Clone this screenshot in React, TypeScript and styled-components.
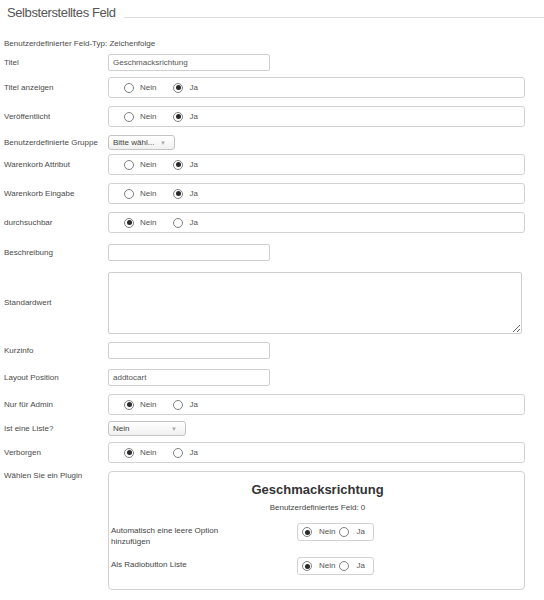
import React from 'react';
import styled, { createGlobalStyle } from 'styled-components';

const Global = createGlobalStyle`
  html, body { margin: 0; padding: 0; background: #fff; }
  body { font-family: "Liberation Sans", Arial, sans-serif; color: #444; }
  * { box-sizing: border-box; }
`;

const Page = styled.div`
  width: 544px;
  padding-bottom: 10px;
`;

const Header = styled.div`
  display: flex;
  align-items: center;
  height: 26px;
  padding-left: 7px;
`;

const HeaderTitle = styled.span`
  font-family: "Liberation Sans", Arial, sans-serif;
  font-size: 13px;
  letter-spacing: -0.4px;
  line-height: 26px;
  color: #555;
  white-space: nowrap;
`;

const HeaderLine = styled.div`
  flex: 1;
  height: 1px;
  background: #dcdcdc;
  margin-left: 8px;
  margin-top: 8px;
`;

const Row = styled.div<{ $gap: number; $top?: boolean }>`
  display: flex;
  align-items: ${(p) => (p.$top ? 'flex-start' : 'center')};
  margin-top: ${(p) => p.$gap}px;
  padding-left: 4px;
`;

const Label = styled.div`
  width: 104px;
  flex-shrink: 0;
  font-size: 8px;
  line-height: 10px;
  color: #4a4a4a;
`;

const Note = styled.div`
  font-size: 8px;
  line-height: 10px;
  color: #4a4a4a;
`;

const TextInput = styled.input`
  width: 162px;
  height: 17px;
  border: 1px solid #cfcfcf;
  border-radius: 2px;
  padding: 0 4px;
  font-family: "Liberation Sans", Arial, sans-serif;
  font-size: 8px;
  color: #555;
  background: #fff;
  outline: none;
`;

const TextArea = styled.textarea`
  width: 414px;
  height: 62px;
  border: 1px solid #cfcfcf;
  border-radius: 2px;
  padding: 3px 4px;
  font-family: "Liberation Sans", Arial, sans-serif;
  font-size: 8px;
  background: #fff;
  outline: none;
  display: block;
`;

const RadioBox = styled.div<{ $compact?: boolean }>`
  display: flex;
  align-items: center;
  width: ${(p) => (p.$compact ? 77 : 417)}px;
  height: ${(p) => (p.$compact ? 18 : 21)}px;
  border: 1px solid #d2d2d2;
  border-radius: 3px;
  padding-left: ${(p) => (p.$compact ? 4 : 15)}px;
  background: #fff;
`;

const Option = styled.div<{ $compact?: boolean }>`
  display: flex;
  align-items: center;
  margin-right: ${(p) => (p.$compact ? 4 : 17)}px;
`;

const Circle = styled.span<{ $on: boolean }>`
  position: relative;
  width: 10px;
  height: 10px;
  border: 1px solid #808080;
  border-radius: 50%;
  background: #fff;
  flex-shrink: 0;
  &::after {
    content: '';
    display: ${(p) => (p.$on ? 'block' : 'none')};
    position: absolute;
    left: 1.5px;
    top: 1.5px;
    width: 5px;
    height: 5px;
    border-radius: 50%;
    background: #2a2a2a;
  }
`;

const OptionText = styled.span<{ $compact?: boolean }>`
  margin-left: ${(p) => (p.$compact ? 7 : 6)}px;
  font-size: 8px;
  line-height: 10px;
  color: #555;
`;

const Select = styled.div<{ $w: number }>`
  display: flex;
  align-items: center;
  justify-content: space-between;
  width: ${(p) => p.$w}px;
  height: 15px;
  border: 1px solid #c4c4c4;
  border-radius: 3px;
  padding: 0 8px 0 4px;
  background: linear-gradient(#ffffff, #f0f0f0);
  font-size: 8px;
  color: #444;
`;

const Arrow = styled.span`
  font-size: 6px;
  color: #aaa;
`;

const PluginBox = styled.div`
  width: 417px;
  height: 119px;
  border: 1px solid #d2d2d2;
  border-radius: 4px;
  padding: 9px 0 0 2px;
`;

const PluginTitle = styled.div`
  text-align: center;
  font-size: 13px;
  font-weight: bold;
  line-height: 18px;
  color: #333;
`;

const PluginSub = styled.div`
  text-align: center;
  margin-top: 4px;
  font-size: 8px;
  line-height: 10px;
  color: #444;
`;

const PluginRow = styled.div<{ $gap: number }>`
  display: grid;
  grid-template-columns: 186px auto;
  align-items: start;
  margin-top: ${(p) => p.$gap}px;
`;

const PluginLabel = styled.div`
  max-width: 130px;
  margin-top: 2px;
  font-size: 8px;
  line-height: 11px;
  color: #444;
`;

type RadioProps = { value: 'Nein' | 'Ja'; compact?: boolean };

const Radios = ({ value, compact }: RadioProps) => (
  <RadioBox $compact={compact}>
    {(['Nein', 'Ja'] as const).map((o) => (
      <Option key={o} $compact={compact}>
        <Circle $on={value === o} />
        <OptionText $compact={compact}>{o}</OptionText>
      </Option>
    ))}
  </RadioBox>
);

export default function App() {
  return (
    <Page>
      <Global />
      <Header>
        <HeaderTitle>Selbsterstelltes Feld</HeaderTitle>
        <HeaderLine />
      </Header>

      <Row $gap={13}>
        <Note>Benutzerdefinierter Feld-Typ: Zeichenfolge</Note>
      </Row>
      <Row $gap={5}>
        <Label>Titel</Label>
        <TextInput readOnly value="Geschmacksrichtung" />
      </Row>
      <Row $gap={6}>
        <Label>Titel anzeigen</Label>
        <Radios value="Ja" />
      </Row>
      <Row $gap={8}>
        <Label>Veröffentlicht</Label>
        <Radios value="Ja" />
      </Row>
      <Row $gap={8}>
        <Label>Benutzerdefinierte Gruppe</Label>
        <Select $w={67}>
          <span>Bitte wähl...</span>
          <Arrow>▼</Arrow>
        </Select>
      </Row>
      <Row $gap={4}>
        <Label>Warenkorb Attribut</Label>
        <Radios value="Ja" />
      </Row>
      <Row $gap={8}>
        <Label>Warenkorb Eingabe</Label>
        <Radios value="Ja" />
      </Row>
      <Row $gap={8}>
        <Label>durchsuchbar</Label>
        <Radios value="Nein" />
      </Row>
      <Row $gap={11}>
        <Label>Beschreibung</Label>
        <TextInput readOnly value="" />
      </Row>
      <Row $gap={11}>
        <Label>Standardwert</Label>
        <TextArea readOnly value="" />
      </Row>
      <Row $gap={8}>
        <Label>Kurzinfo</Label>
        <TextInput readOnly value="" />
      </Row>
      <Row $gap={10}>
        <Label>Layout Position</Label>
        <TextInput readOnly value="addtocart" />
      </Row>
      <Row $gap={8}>
        <Label>Nur für Admin</Label>
        <Radios value="Nein" />
      </Row>
      <Row $gap={6}>
        <Label>Ist eine Liste?</Label>
        <Select $w={78}>
          <span>Nein</span>
          <Arrow>▼</Arrow>
        </Select>
      </Row>
      <Row $gap={6}>
        <Label>Verborgen</Label>
        <Radios value="Nein" />
      </Row>
      <Row $gap={8} $top>
        <Label>Wählen Sie ein Plugin</Label>
        <PluginBox>
          <PluginTitle>Geschmacksrichtung</PluginTitle>
          <PluginSub>Benutzerdefiniertes Feld: 0</PluginSub>
          <PluginRow $gap={10}>
            <PluginLabel>Automatisch eine leere Option hinzufügen</PluginLabel>
            <Radios value="Nein" compact />
          </PluginRow>
          <PluginRow $gap={10}>
            <PluginLabel>Als Radiobutton Liste</PluginLabel>
            <Radios value="Nein" compact />
          </PluginRow>
        </PluginBox>
      </Row>
    </Page>
  );
}
